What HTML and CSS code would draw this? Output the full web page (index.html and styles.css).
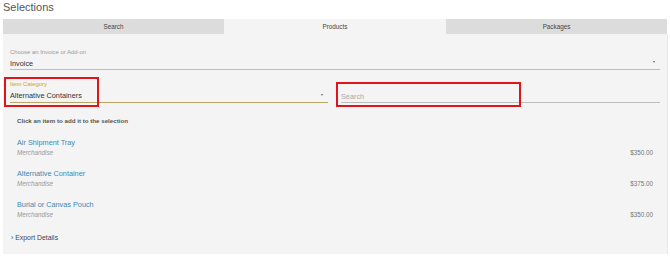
FILE: index.html
```html
<!DOCTYPE html>
<html>
<head>
  <title>Selections</title>
  <link rel="stylesheet" href="styles.css">
</head>
<body>
  <h2 class="title">Selections</h2>

  <div class="tabs">
    <div class="tab">Search</div>
    <div class="tab active">Products</div>
    <div class="tab">Packages</div>
  </div>

  <div class="panel">
    <div class="field select">
      <label>Choose an Invoice or Add-on</label>
      <div class="value">Invoice</div>
    </div>

    <div class="field-row">
      <div class="field select focused">
        <label>Item Category</label>
        <div class="value">Alternative Containers</div>
        <div class="mark mark-category"></div>
      </div>
      <div class="field search">
        <div class="value placeholder">Search</div>
        <div class="mark mark-search"></div>
      </div>
    </div>

    <div class="hint">Click an item to add it to the selection</div>

    <div class="item-list">
      <div class="item">
        <div class="item-name">Air Shipment Tray</div>
        <div class="item-meta">
          <span class="item-type">Merchandise</span>
          <span class="item-price">$350.00</span>
        </div>
      </div>
      <div class="item">
        <div class="item-name">Alternative Container</div>
        <div class="item-meta">
          <span class="item-type">Merchandise</span>
          <span class="item-price">$375.00</span>
        </div>
      </div>
      <div class="item">
        <div class="item-name">Burial or Canvas Pouch</div>
        <div class="item-meta">
          <span class="item-type">Merchandise</span>
          <span class="item-price">$350.00</span>
        </div>
      </div>
    </div>

    <div class="export">&rsaquo; Export Details</div>
  </div>
</body>
</html>
```

FILE: styles.css
```css
body {
  font-family: "Liberation Sans", Arial, sans-serif;
  margin: 0;
  padding: 0 3px;
  width: 664px;
  background: white;
  color: #333;
}
.title {
  font-size: 11px;
  font-weight: normal;
  line-height: 14px;
  height: 14px;
  margin: 0 0 5px 0;
  color: #555;
}
.tabs {
  display: grid;
  grid-template-columns: 221px 222px 221px;
}
.tab {
  height: 15px;
  line-height: 15px;
  text-align: center;
  font-size: 6.3px;
  color: #444;
  background: #dcdcdc;
}
.tab.active {
  background: #f4f4f4;
}
.panel {
  background: #f4f4f4;
  padding: 13px 7px 11px 7px;
  box-shadow: 1px 0 0 #e8e8e8;
}
.field {
  position: relative;
  border-bottom: 1px solid #bdbdbd;
}
.field label {
  display: block;
  font-size: 5.9px;
  line-height: 10px;
  height: 10px;
  color: #999;
}
.field .value {
  font-size: 7.3px;
  line-height: 11px;
  height: 11px;
  margin-top: 1px;
  color: #333;
}
.field .placeholder {
  color: #aaa;
}
.field.select::after {
  content: "";
  position: absolute;
  right: 5px;
  bottom: 6px;
  border-left: 1.5px solid transparent;
  border-right: 1.5px solid transparent;
  border-top: 2px solid #666;
}
.field.focused {
  border-bottom-color: #b9a564;
}
.field.focused label {
  color: #c9a227;
}
.field-row {
  display: grid;
  grid-template-columns: 318px 319px;
  gap: 13px;
  margin-top: 9px;
}
.field.search {
  padding-top: 11px;
}
.mark {
  position: absolute;
  border: 2px solid #e0151c;
}
.mark-category {
  left: -6px;
  top: -2px;
  width: 91px;
  height: 26px;
}
.mark-search {
  left: -5px;
  top: 3px;
  width: 181px;
  height: 21px;
}
.hint {
  font-size: 6.2px;
  font-weight: bold;
  line-height: 10px;
  color: #555;
  margin: 13px 0 0 7px;
}
.item-list {
  display: flex;
  flex-direction: column;
  gap: 11px;
  margin: 12px 7px 0 7px;
}
.item-name {
  font-size: 7.3px;
  line-height: 10px;
  color: #3d8ab3;
}
.item-meta {
  display: flex;
  justify-content: space-between;
  line-height: 10px;
  font-size: 6.3px;
}
.item-type {
  font-style: italic;
  color: #999;
}
.item-price {
  color: #777;
}
.export {
  margin-top: 13px;
  font-size: 6.9px;
  line-height: 10px;
  color: #444;
  padding-left: 1px;
}
```
